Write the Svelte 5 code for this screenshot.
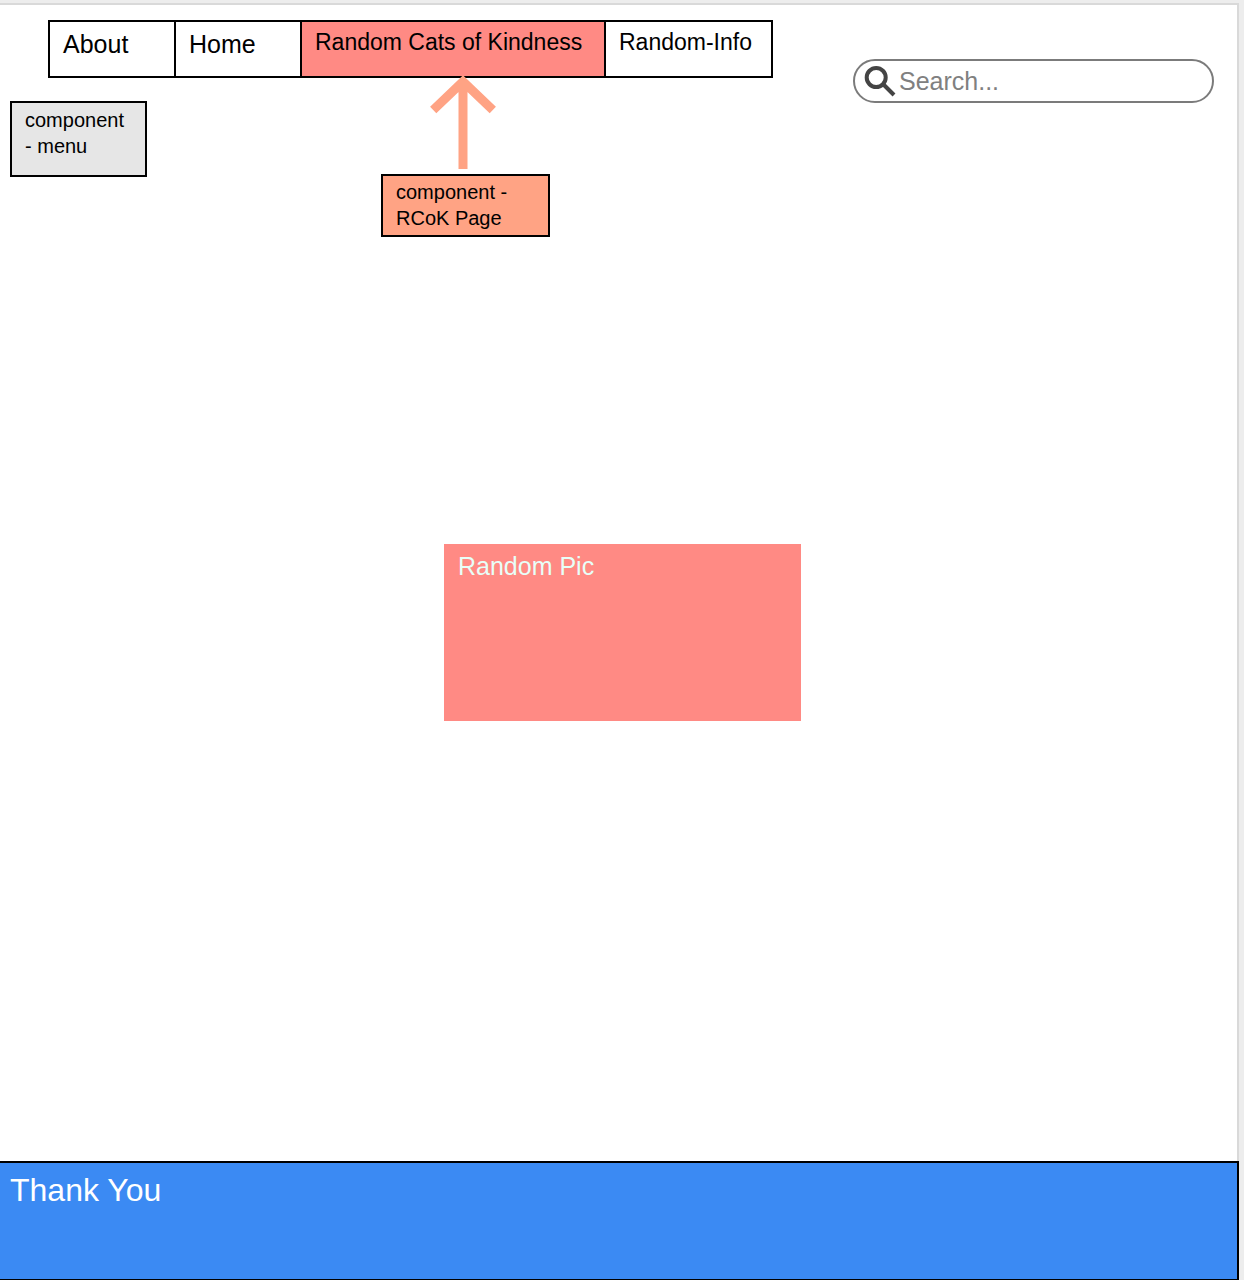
<script>
  const items = [
    { label: 'About', size: 'short' },
    { label: 'Home', size: 'short' },
    { label: 'Random Cats of Kindness', size: 'long', active: true },
    { label: 'Random-Info', size: 'medium' }
  ];
  let query = $state('');
</script>

<div class="backdrop">
  <div class="page">
    <header>
      <div class="menu">
        <nav aria-label="Main">
          {#each items as item}
            <a href="#top" class={item.size} class:active={item.active} aria-current={item.active ? 'page' : undefined}>{item.label}</a>
          {/each}
        </nav>
        <div class="notes">
          <div class="note menu-note">component - menu</div>
          <div class="callout">
            <svg viewBox="0 0 66 94" aria-hidden="true">
              <path d="M33 94V6M3.2 35L33 6.4L62.8 35" />
            </svg>
            <div class="note page-note">component - RCoK Page</div>
          </div>
        </div>
      </div>
      <label class="search">
        <svg viewBox="0 0 32 32" aria-hidden="true">
          <circle cx="12.2" cy="12.5" r="9.5" />
          <path d="M19.5 19.5L30 30" />
        </svg>
        <input type="text" placeholder="Search..." aria-label="Search" bind:value={query} />
      </label>
    </header>

    <main>
      <section class="picture">Random Pic</section>
    </main>
  </div>
  <footer>Thank You</footer>
</div>

<style>
  :global(body) {
    margin: 0;
    background: #ededed;
  }

  .backdrop,
  .backdrop * {
    box-sizing: border-box;
  }

  .backdrop {
    display: flex;
    flex-direction: column;
    min-height: 100vh;
    padding: 3px 5px 0 0;
    font-family: 'Liberation Sans', Arial, Helvetica, sans-serif;
    font-size: 25px;
    line-height: 30px;
    color: #000;
  }

  .page {
    flex: 1;
    display: flex;
    flex-direction: column;
    background: #fff;
    border: solid #d9d9d9;
    border-width: 2px 2px 0 0;
  }

  header {
    display: flex;
    justify-content: space-between;
    align-items: flex-start;
    gap: 24px;
    padding: 15px 23px 0 10px;
  }

  .menu {
    flex-shrink: 0;
  }

  nav {
    display: flex;
    padding-left: 38px;
  }

  nav a {
    min-height: 58px;
    padding: 7px 13px;
    border: 2px solid #000;
    color: inherit;
    text-decoration: none;
    white-space: nowrap;
  }

  nav a + a {
    margin-left: -2px;
  }

  .short {
    width: 128px;
  }

  .long,
  .medium {
    font-size: 23px;
    line-height: 26px;
  }

  .long {
    width: 306px;
  }

  .medium {
    width: 169px;
  }

  .active {
    background: #ff8a84;
  }

  .search {
    display: flex;
    align-items: center;
    flex: 0 1 361px;
    min-width: 0;
    height: 44px;
    margin-top: 39px;
    padding: 0 10px 0 9px;
    border: 2px solid #7b7b7b;
    border-radius: 22px;
    background: #fff;
  }

  .search svg {
    flex-shrink: 0;
    width: 32px;
    height: 32px;
    fill: none;
    stroke: #444;
    stroke-width: 4;
  }

  .search input {
    flex: 1;
    min-width: 0;
    padding: 0 0 0 3px;
    border: 0;
    outline: 0;
    background: none;
    font: inherit;
    color: #333;
  }

  .search input::placeholder {
    color: #808080;
    opacity: 1;
  }

  .notes {
    display: flex;
    align-items: flex-start;
    gap: 234px;
  }

  .note {
    border: 2px solid #000;
    font-size: 20px;
    line-height: 26px;
  }

  .menu-note {
    width: 137px;
    min-height: 76px;
    margin-top: 23px;
    padding: 4px 20px 4px 13px;
    background: #e6e6e6;
  }

  .callout {
    display: flex;
    flex-direction: column;
    align-items: center;
    width: 169px;
    margin-top: -3px;
  }

  .callout svg {
    position: relative;
    width: 66px;
    height: 94px;
    margin-right: 5px;
    fill: none;
    stroke: #ffa384;
    stroke-width: 9;
  }

  .page-note {
    width: 100%;
    min-height: 63px;
    margin-top: 5px;
    padding: 3px 36px 3px 13px;
    background: #ffa384;
  }

  main {
    flex: 1;
    display: flex;
    justify-content: center;
    align-items: flex-start;
    padding: 307px 0 48px 8px;
  }

  .picture {
    width: 357px;
    min-height: 177px;
    padding: 7px 14px;
    background: #ff8a84;
    color: #e8fff8;
  }

  footer {
    min-height: 119px;
    padding: 9px 10px;
    border: solid #000;
    border-width: 2px 2px 1px 0;
    background: #3b8af3;
    color: #fff;
    font-size: 32px;
    line-height: 36px;
  }
</style>
